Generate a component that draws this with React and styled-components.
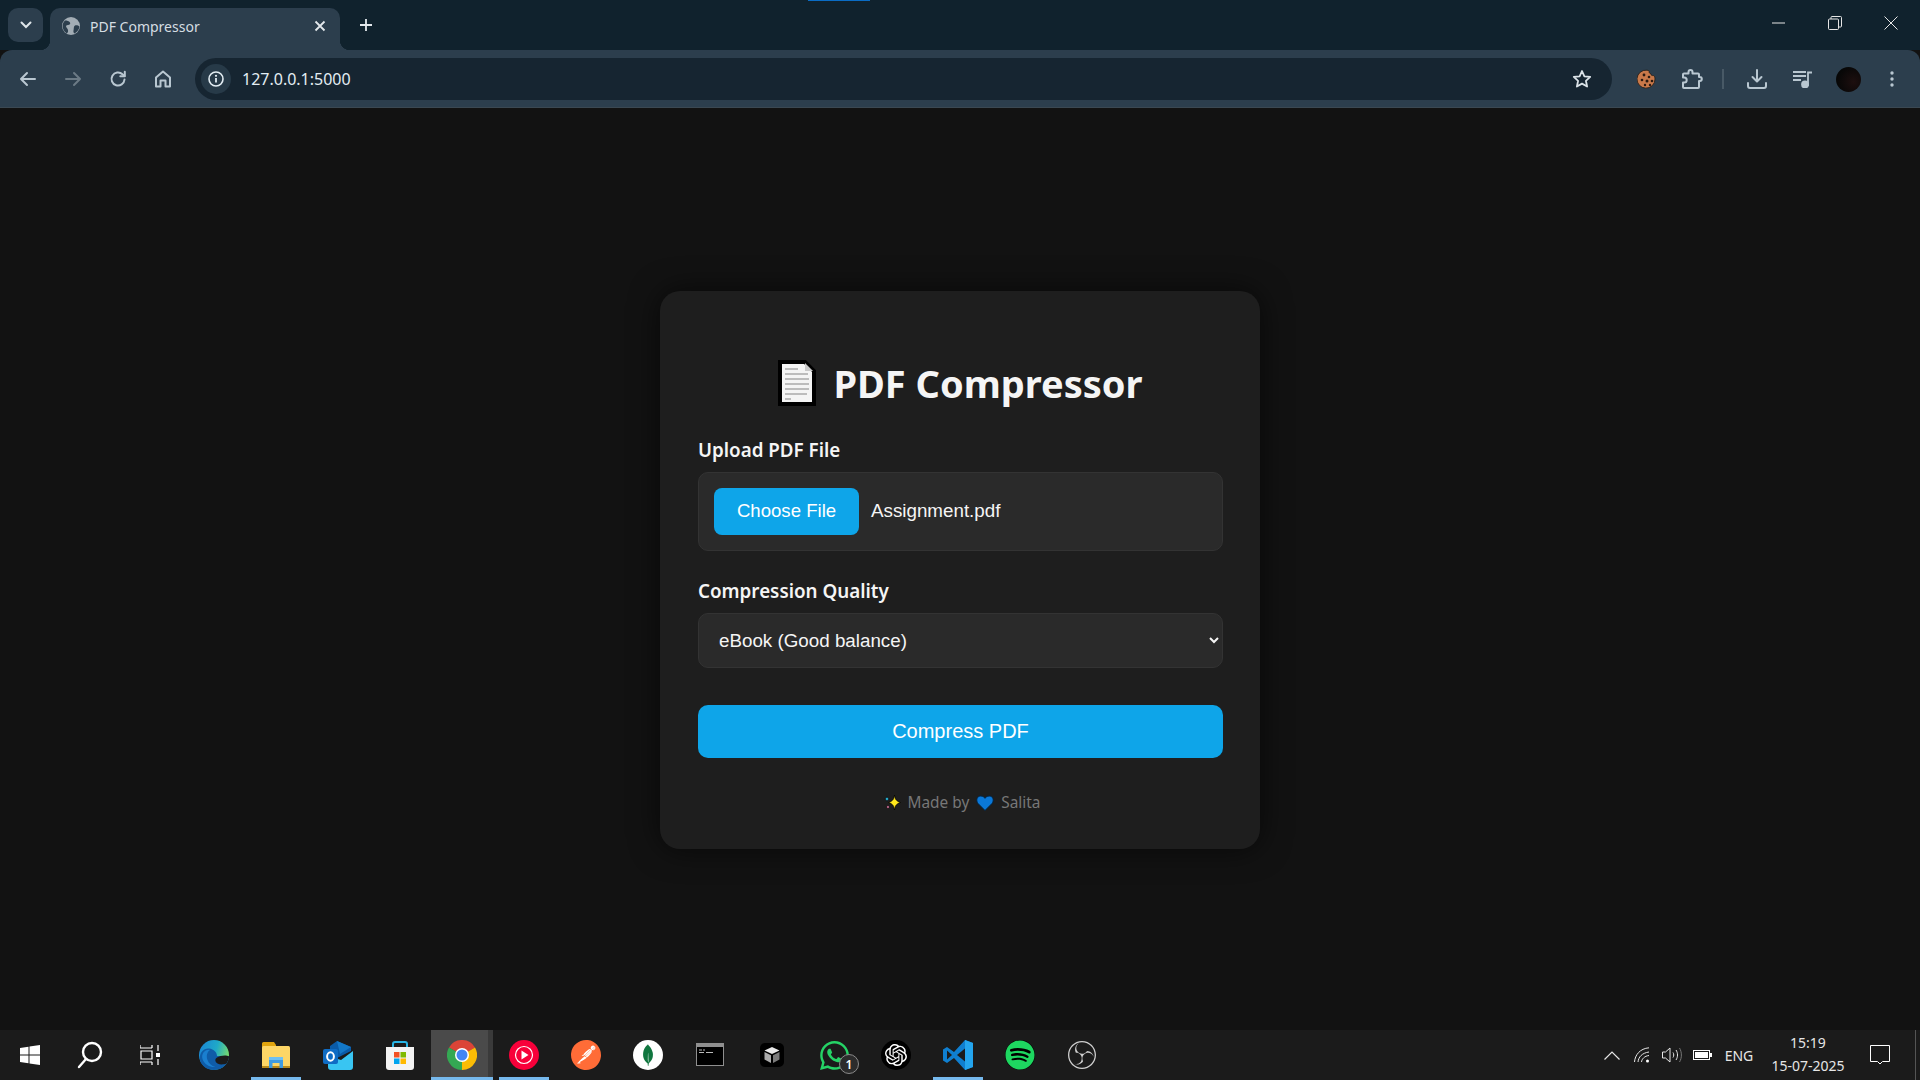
import React from 'react';
import styled, { createGlobalStyle } from 'styled-components';
import { FaWhatsapp, FaSpotify } from 'react-icons/fa';
import { SiOpenai, SiObsstudio, SiPostman, SiMongodb } from 'react-icons/si';

const GlobalStyle = createGlobalStyle`
	html, body { margin: 0; padding: 0; background: #121212; }
	* { box-sizing: border-box; }
	body { font-family: "Noto Sans", "Open Sans", sans-serif; }
`;

const Screen = styled.div`
	width: 1920px;
	height: 1080px;
	display: flex;
	flex-direction: column;
	overflow: hidden;
	background: #121212;
`;

/* browser chrome */
const TitleBar = styled.div`
	position: relative;
	height: 50px;
	background: #10222d;
	display: flex;
	align-items: flex-end;
	padding-left: 8px;
	flex: none;
`;
const LoadSliver = styled.div`
	position: absolute;
	top: 0;
	left: 808px;
	width: 62px;
	height: 1px;
	background: #0a6cc4;
`;
const TabSearch = styled.div`
	width: 35px;
	height: 34px;
	margin-bottom: 8px;
	margin-right: 7px;
	border-radius: 10px;
	background: #2c3e4d;
	display: flex;
	align-items: center;
	justify-content: center;
`;
const Tab = styled.div`
	position: relative;
	width: 290px;
	height: 42px;
	background: #2c3e4d;
	border-radius: 10px 10px 0 0;
	display: flex;
	align-items: center;
	padding: 0 12px 6px 12px;
	gap: 10px;

	&::before, &::after {
		content: '';
		position: absolute;
		bottom: 0;
		width: 10px;
		height: 10px;
	}
	&::before {
		left: -10px;
		background: radial-gradient(circle at 0 0, transparent 10px, #2c3e4d 10.5px);
	}
	&::after {
		right: -10px;
		background: radial-gradient(circle at 100% 0, transparent 10px, #2c3e4d 10.5px);
	}
`;
const TabTitle = styled.span`
	flex: 1;
	font-size: 14px;
	color: #d5dde2;
	white-space: nowrap;
`;
const NewTab = styled.div`
	width: 26px;
	height: 42px;
	margin-left: 13px;
	padding-bottom: 8px;
	display: flex;
	align-items: center;
	justify-content: center;
`;
const WindowControls = styled.div`
	margin-left: auto;
	height: 50px;
	display: flex;
	align-items: center;
	padding: 0 22px 4px 0;
	gap: 42px;
`;
const Toolbar = styled.div`
	height: 58px;
	flex: none;
	background: #2c3e4d;
	border-radius: 12px 12px 0 0;
	border-bottom: 1px solid #3b4852;
	display: flex;
	align-items: center;
	padding: 1px 6px 0 5px;
`;
const NavButton = styled.div`
	width: ${p => p.$w || 45}px;
	height: 40px;
	flex: none;
	display: flex;
	align-items: center;
	justify-content: center;
`;
const Omnibox = styled.div`
	flex: 1;
	height: 42px;
	margin-left: 10px;
	margin-right: 12px;
	border-radius: 21px;
	background: #162531;
	display: flex;
	align-items: center;
	padding: 0 20px 0 6px;
`;
const InfoChip = styled.div`
	width: 30px;
	height: 30px;
	border-radius: 50%;
	background: #273a48;
	display: flex;
	align-items: center;
	justify-content: center;
	flex: none;
`;
const Url = styled.span`
	flex: 1;
	margin-left: 11px;
	font-size: 16px;
	color: #e3edf3;
`;
const ToolDivider = styled.div`
	width: 2px;
	height: 20px;
	background: #485966;
	margin: 0 10px 0 8px;
	flex: none;
`;
const Avatar = styled.div`
	width: 25px;
	height: 25px;
	border-radius: 50%;
	background: radial-gradient(circle at 70% 60%, #1d0f0f, #070707 70%);
`;

/* page */
const Main = styled.main`
	flex: 1;
	display: flex;
	align-items: center;
	justify-content: center;
	background: #121212;
	padding-top: 1px;
`;
const Card = styled.section`
	width: 600px;
	background: #1e1e1e;
	border-radius: 20px;
	padding: 38px 37px 34px 38px;
	box-shadow: 0 0 30px rgba(0, 0, 0, 0.6);
`;
const Heading = styled.h1`
	margin: 28px 0 28px;
	height: 52px;
	line-height: 52px;
	display: flex;
	align-items: center;
	justify-content: center;
	gap: 17px;
	font-size: 38px;
	font-weight: 700;
	color: #f5f5f5;
`;
const FieldLabel = styled.label`
	display: block;
	height: 26px;
	line-height: 26px;
	margin-bottom: 9px;
	font-size: 18.8px;
	font-weight: 600;
	color: #f5f5f5;
`;
const FileBox = styled.div`
	height: 79px;
	margin-bottom: 27px;
	padding: 0 15px;
	background: #2a2a2a;
	border: 1px solid #333;
	border-radius: 10px;
	display: flex;
	align-items: center;
	gap: 12px;
	font-family: "Liberation Sans", Arial, sans-serif;
`;
const ChooseButton = styled.button`
	width: 145px;
	height: 47px;
	border: 0;
	border-radius: 8px;
	background: #0ea5e9;
	color: #fff;
	font-family: inherit;
	font-size: 18.6px;
`;
const FileName = styled.span`
	font-size: 18.8px;
	color: #f5f5f5;
`;
const QualitySelect = styled.select`
	display: block;
	width: 100%;
	height: 55px;
	padding: 0 16px;
	background: #2a2a2a;
	border: 1px solid #333;
	border-radius: 10px;
	color: #f5f5f5;
	font-family: "Liberation Sans", Arial, sans-serif;
	font-size: 18.8px;
`;
const SubmitButton = styled.button`
	display: block;
	width: 100%;
	height: 53px;
	margin-top: 37px;
	border: 0;
	border-radius: 10px;
	background: #0ea5e9;
	color: #fff;
	font-family: "Liberation Sans", Arial, sans-serif;
	font-size: 20px;
`;
const Footer = styled.div`
	height: 24px;
	margin-top: 33px;
	padding-left: 3px;
	display: flex;
	align-items: center;
	justify-content: center;
	gap: 7px;
	font-size: 15.4px;
	color: #777;
`;

/* windows taskbar */
const Taskbar = styled.footer`
	height: 50px;
	flex: none;
	background: #1b1b1b;
	display: flex;
	align-items: stretch;
`;
const SystemButton = styled.div`
	width: 60px;
	display: flex;
	align-items: center;
	justify-content: center;
`;
const AppStrip = styled.div`
	margin-left: 3px;
	display: flex;
`;
const AppIcon = styled.div`
	position: relative;
	width: 62px;
	display: flex;
	align-items: center;
	justify-content: center;
	background: ${p => (p.$active ? 'linear-gradient(90deg, #4a4a4a 92%, #3a3a3a 92%)' : 'transparent')};

	&::after {
		content: '';
		display: ${p => (p.$open ? 'block' : 'none')};
		position: absolute;
		bottom: 0;
		left: ${p => (p.$active ? 0 : 6)}px;
		right: ${p => (p.$active ? 0 : 6)}px;
		height: 3px;
		background: #76b9ed;
	}
`;
const RoundIcon = styled.div`
	width: ${p => p.$size || 30}px;
	height: ${p => p.$size || 30}px;
	border-radius: 50%;
	background: ${p => p.$bg};
	display: flex;
	align-items: center;
	justify-content: center;
`;
const Badge = styled.span`
	position: absolute;
	left: 36px;
	top: 24px;
	width: 20px;
	height: 20px;
	border-radius: 50%;
	background: #2c2c2c;
	border: 1px solid #8a8a8a;
	color: #fff;
	font-size: 12px;
	font-weight: 600;
	display: flex;
	align-items: center;
	justify-content: center;
`;
const Tray = styled.div`
	margin-left: auto;
	display: flex;
	align-items: center;
	color: #e6e6e6;
	border-right: 1px solid #555;
	margin-right: 4px;
`;
const TrayIcon = styled.div`
	width: 30px;
	display: flex;
	justify-content: center;
`;
const Lang = styled.span`
	width: 44px;
	text-align: center;
	font-size: 14px;
`;
const Clock = styled.div`
	width: 94px;
	text-align: center;
	font-size: 14px;
	line-height: 23px;
	margin-bottom: 2px;
`;
const NotifyButton = styled.div`
	width: 47px;
	display: flex;
	justify-content: center;
	margin-left: 1px;
	margin-right: 12px;
`;

const stroke = { fill: 'none', stroke: '#b9c7d1', strokeWidth: 2, strokeLinecap: 'round', strokeLinejoin: 'round' };

const App = () => {
	return (
		<Screen>
			<GlobalStyle />
			<TitleBar>
				<LoadSliver />
				<TabSearch>
					<svg width="12" height="8" viewBox="0 0 12 8"><path d="M1.5 1.5 6 6l4.5-4.5" fill="none" stroke="#dfe6ea" strokeWidth="2" strokeLinecap="round" /></svg>
				</TabSearch>
				<Tab>
					<svg width="18" height="18" viewBox="0 0 18 18">
						<circle cx="9" cy="9" r="9" fill="#a3adb5" />
						<path d="M3 3.500c2 0 4 .5 5 2 .8 1.300-.5 2.500-2 2.600-1.800.2-2.500 1.200-1.500 2.400.8 1 1.600 1.500 1.600 3.500 0 1-.6 2-1.500 2.500C2 14.500.6 11.500.6 9 .6 7 1.500 5 3 3.500zM13 8.500c1.500-.4 3.500 0 4.400 1-.3 3-2 5.500-5 7-1-.8-1.200-2-.8-3.500.3-1.500 0-3.800 1.400-4.500z" fill="#2c3e4d" />
					</svg>
					<TabTitle>PDF Compressor</TabTitle>
					<svg width="12" height="12" viewBox="0 0 12 12" style={{ marginRight: 2 }}><path d="M1.500 1.500l9 9M10.500 1.500l-9 9" stroke="#e3e8ec" strokeWidth="1.800" /></svg>
				</Tab>
				<NewTab>
					<svg width="14" height="14" viewBox="0 0 14 14"><path d="M7 1v12M1 7h12" stroke="#e3e8ec" strokeWidth="1.800" /></svg>
				</NewTab>
				<WindowControls>
					<svg width="14" height="2" viewBox="0 0 14 2"><path d="M0 1h13" stroke="#e6e6e6" /></svg>
					<svg width="14" height="14" viewBox="0 0 14 14" fill="none" stroke="#e6e6e6"><rect x="0.500" y="3" width="10" height="10.500" rx="1" /><path d="M3 3V1.500a1 1 0 0 1 1-1h8.500a1 1 0 0 1 1 1V10a1 1 0 0 1-1 1H10.500" /></svg>
					<svg width="14" height="14" viewBox="0 0 14 14"><path d="M.5.5l13 13M13.500.5l-13 13" stroke="#e6e6e6" /></svg>
				</WindowControls>
			</TitleBar>

			<Toolbar>
				<NavButton>
					<svg width="18" height="16" viewBox="0 0 18 16" {...stroke}><path d="M16 8H2M8 2 2 8l6 6" /></svg>
				</NavButton>
				<NavButton>
					<svg width="18" height="16" viewBox="0 0 18 16" {...stroke} stroke="#6b7a85"><path d="M2 8h14M10 2l6 6-6 6" /></svg>
				</NavButton>
				<NavButton>
					<svg width="18" height="18" viewBox="0 0 18 18" {...stroke}><path d="M15.500 9.500a6.500 6.500 0 1 1-2-5.200L15.500 6" /><path d="M15.800 1.800V6.300H11.300" /></svg>
				</NavButton>
				<NavButton>
					<svg width="18" height="18" viewBox="0 0 18 18" {...stroke}><path d="M2 7.500 9 1.500l7 6V16.500h-4.500v-6h-5v6H2z" /></svg>
				</NavButton>
				<Omnibox>
					<InfoChip>
						<svg width="16" height="16" viewBox="0 0 16 16"><circle cx="8" cy="8" r="7" fill="none" stroke="#e3edf3" strokeWidth="1.600" /><path d="M8 7v4.500" stroke="#e3edf3" strokeWidth="1.800" /><circle cx="8" cy="4.800" r="1.100" fill="#e3edf3" /></svg>
					</InfoChip>
					<Url>127.0.0.1:5000</Url>
					<svg width="20" height="20" viewBox="0 0 20 20" fill="none" stroke="#dbe3e8" strokeWidth="1.800" strokeLinejoin="round"><path d="m10 2 2.400 5.300 5.800.6-4.300 3.900 1.200 5.700L10 14.600l-5.100 2.900 1.200-5.700L1.800 7.900l5.800-.6z" /></svg>
				</Omnibox>
				<NavButton>
					<svg width="20" height="20" viewBox="0 0 20 20">
						<path d="M10 1.200c1 0 1.600.4 2.200 1-.3 1.200.3 2.300 1.500 2.500.2 1.400 1.500 2.200 2.800 1.800.8.600 1.500 1.600 1.500 3.500a9 9 0 1 1-8-8.800z" fill="#c9794a" stroke="#221a14" strokeWidth="0.800" />
						<circle cx="7" cy="6" r="1.400" fill="#2b1a12" /><circle cx="12" cy="8" r="1.300" fill="#2b1a12" /><circle cx="5" cy="11" r="1.300" fill="#2b1a12" /><circle cx="10" cy="12" r="1.500" fill="#2b1a12" /><circle cx="15" cy="12" r="1.300" fill="#2b1a12" /><circle cx="8" cy="16" r="1.200" fill="#2b1a12" /><circle cx="13" cy="16" r="1.200" fill="#2b1a12" />
					</svg>
				</NavButton>
				<NavButton>
					<svg width="22" height="22" viewBox="0 0 22 22" {...stroke}><path d="M2 6.500a1 1 0 0 1 1-1h4.500V4a2 2 0 0 1 4 0v1.500H17a1 1 0 0 1 1 1V9h.8a2 2 0 0 1 0 4H18v6a1 1 0 0 1-1 1H3a1 1 0 0 1-1-1v-4.500h1.200a2.500 2.500 0 0 0 0-5H2z" /></svg>
				</NavButton>
				<ToolDivider />
				<NavButton $w={46}>
					<svg width="22" height="22" viewBox="0 0 22 22" {...stroke}><path d="M11 2v11M6.500 9l4.500 4.500L15.500 9" /><path d="M2 15v3a2 2 0 0 0 2 2h14a2 2 0 0 0 2-2v-3" /></svg>
				</NavButton>
				<NavButton $w={46}>
					<svg width="20" height="18" viewBox="0 0 20 18" fill="none" stroke="#b9c7d1" strokeWidth="1.800"><path d="M0 2h13M0 6h13M0 10h8" /><path d="M15 16V2.500h4" /><circle cx="12" cy="14.500" r="3" fill="#b9c7d1" /></svg>
				</NavButton>
				<NavButton $w={44}><Avatar /></NavButton>
				<NavButton $w={44}>
					<svg width="4" height="16" viewBox="0 0 4 16"><circle cx="2" cy="2" r="1.700" fill="#b9c7d1" /><circle cx="2" cy="8" r="1.700" fill="#b9c7d1" /><circle cx="2" cy="14" r="1.700" fill="#b9c7d1" /></svg>
				</NavButton>
			</Toolbar>

			<Main>
				<Card>
					<Heading>
						<svg width="38" height="46" viewBox="0 0 38 46">
							<path d="M2 2h25l9 9v33H2z" fill="#f4f4f4" stroke="#000" strokeWidth="4" />
							<path d="M27 3v8h8z" fill="#c9c9c9" />
							<path d="M7 9h13M7 14h23M7 19h24M7 24h24M7 29h24M7 34h22M7 39h6" stroke="#a9a9a9" strokeWidth="1.600" />
						</svg>
						<span>PDF Compressor</span>
					</Heading>
					<FieldLabel>Upload PDF File</FieldLabel>
					<FileBox>
						<ChooseButton type="button">Choose File</ChooseButton>
						<FileName>Assignment.pdf</FileName>
					</FileBox>
					<FieldLabel>Compression Quality</FieldLabel>
					<QualitySelect defaultValue="ebook">
						<option value="ebook">eBook (Good balance)</option>
					</QualitySelect>
					<SubmitButton type="button">Compress PDF</SubmitButton>
					<Footer>
						<svg width="17" height="17" viewBox="0 0 17 17">
							<path d="M10.500 1c.6 4 1.500 6 6 7.500-4.500 1.500-5.400 3.500-6 7.500-.6-4-1.500-6-6-7.500 4.500-1.500 5.400-3.500 6-7.500z" fill="#ffe81c" stroke="#000" strokeWidth="0.700" />
							<path d="M3 2.500c.3 1.400 1 2.100 2.500 2.500C4 5.400 3.300 6.100 3 7.500 2.700 6.100 2 5.400.5 5 2 4.600 2.700 3.900 3 2.500z" fill="#2ab6d9" stroke="#000" strokeWidth="0.400" />
							<path d="M4 11c.3 1.100.8 1.700 2 2-1.200.3-1.700.9-2 2-.3-1.100-.8-1.700-2-2 1.200-.3 1.700-.9 2-2z" fill="#e87fa8" stroke="#000" strokeWidth="0.400" />
						</svg>
						<span>Made by</span>
						<svg width="18" height="16" viewBox="0 0 18 16"><path d="M9 15.500 2 8.500C-.5 5.500 1 1 4.800 1 6.800 1 8.200 2 9 3.300 9.800 2 11.200 1 13.200 1 17 1 18.500 5.500 16 8.500z" fill="#0a78d8" stroke="#04233f" strokeWidth="1" /></svg>
						<span>Salita</span>
					</Footer>
				</Card>
			</Main>

			<Taskbar>
				<SystemButton>
					<svg width="20" height="20" viewBox="0 0 20 20" fill="#fff"><path d="M0 3l8.500-1.300v7.800H0zM9.500 1.500 20 0v9.500H9.500zM0 10.500h8.500v7.800L0 17zM9.500 10.500H20V20L9.500 18.500z" /></svg>
				</SystemButton>
				<SystemButton>
					<svg width="26" height="28" viewBox="0 0 26 28" fill="none" stroke="#fff" strokeWidth="2.400" strokeLinecap="round"><circle cx="15" cy="11" r="9" /><path d="M9 18 2 26" /></svg>
				</SystemButton>
				<SystemButton>
					<svg width="20" height="20" viewBox="0 0 20 20" fill="none" stroke="#fff" strokeWidth="1.200"><path d="M0 3h12M12 0v3M0 0v3M1 6h11v8H1zM0 17h12M12 17v3M0 17v3M18 0v6M18 14v6" /><rect x="16" y="8" width="4" height="4" fill="#fff" stroke="none" /></svg>
				</SystemButton>
				<AppStrip>
					<AppIcon>
						<svg width="30" height="30" viewBox="0 0 30 30">
							<defs>
								<linearGradient id="edgeA" x1="0" y1="0.200" x2="1" y2="0.500"><stop offset="0" stopColor="#1a86d6" /><stop offset="0.550" stopColor="#1fa9c8" /><stop offset="1" stopColor="#78dc6c" /></linearGradient>
							</defs>
							<circle cx="15" cy="15" r="15" fill="url(#edgeA)" />
							<path d="M1 20C0 12 5 8 10 8.500c5 .5 8 4 8 7.500H30c0 8-7 14-15 14C8 30 2.500 26 1 20z" fill="#0f5ca8" />
							<path d="M30 16.500c0 1.500-.5 4-2.500 7C25 24.500 21 25 18.500 23.500 16 22 15.500 19 18 17.500c3-1.800 9-3 12-1z" fill="#1b1b1b" />
							<path d="M11 10c-3 2-4 6-2.500 10 1 3 4 6 8 7-5 .5-11-2-13-8C2 14 6 9 11 10z" fill="#1a7fd0" />
						</svg>
					</AppIcon>
					<AppIcon $open>
						<svg width="28" height="26" viewBox="0 0 28 26">
							<path d="M0 1.500A1.500 1.500 0 0 1 1.500 0H12l2 3v3H0z" fill="#e0a40e" />
							<rect y="4" width="28" height="22" rx="1.500" fill="#fdd666" />
							<rect y="24" width="28" height="2" fill="#b98a1a" />
							<path d="M7 26v-9h14v9h-3.500v-5h-7v5z" fill="#3f9be0" />
							<rect x="7" y="15" width="14" height="3" fill="#6fc0f2" />
						</svg>
					</AppIcon>
					<AppIcon>
						<svg width="30" height="30" viewBox="0 0 30 30">
							<path d="M14 1 28 7v4L14 18 7 12V6z" fill="#0a5ba8" />
							<path d="M14 1 28 7 17 14z" fill="#1378c8" />
							<path d="M5 16l13 4 12-9v16a3 3 0 0 1-3 3H8a3 3 0 0 1-3-3z" fill="#39c5f2" />
							<rect y="9" width="15" height="15" rx="2" fill="#0f6cc4" />
							<ellipse cx="7.500" cy="16.500" rx="3.400" ry="4.200" fill="none" stroke="#fff" strokeWidth="2" />
						</svg>
					</AppIcon>
					<AppIcon>
						<svg width="30" height="30" viewBox="0 0 30 30">
							<path d="M8 8V4a2 2 0 0 1 2-2h10a2 2 0 0 1 2 2v4" fill="none" stroke="#27b5e6" strokeWidth="2" />
							<path d="M1 7h28v20a3 3 0 0 1-3 3H4a3 3 0 0 1-3-3z" fill="#f3f3f3" />
							<rect x="9" y="12" width="5.500" height="5.500" fill="#f25022" /><rect x="15.500" y="12" width="5.500" height="5.500" fill="#7fba00" /><rect x="9" y="18.500" width="5.500" height="5.500" fill="#00a4ef" /><rect x="15.500" y="18.500" width="5.500" height="5.500" fill="#ffb900" />
						</svg>
					</AppIcon>
					<AppIcon $open $active>
						<svg width="30" height="30" viewBox="0 0 30 30">
							<path d="M15 15 2.000 7.500A15 15 0 0 1 28 7.500z" fill="#db4437" />
							<path d="M15 15 28 7.500A15 15 0 0 1 15 30z" fill="#fbbc05" />
							<path d="M15 15V30A15 15 0 0 1 2.000 7.500z" fill="#34a853" />
							<circle cx="15" cy="15" r="7" fill="#fff" />
							<circle cx="15" cy="15" r="5.500" fill="#4285f4" />
						</svg>
					</AppIcon>
					<AppIcon $open>
						<svg width="30" height="30" viewBox="0 0 30 30">
							<circle cx="15" cy="15" r="15" fill="#f8003a" />
							<circle cx="15" cy="15" r="8.500" fill="none" stroke="#fff" strokeWidth="1.200" />
							<path d="M12.500 10.500v9l7-4.500z" fill="#fff" />
						</svg>
					</AppIcon>
					<AppIcon>
						<RoundIcon $bg="#fff" $size={26}><SiPostman size={30} color="#ff6c37" style={{ flex: 'none' }} /></RoundIcon>
					</AppIcon>
					<AppIcon>
						<RoundIcon $bg="#fff"><SiMongodb size={22} color="#10763f" /></RoundIcon>
					</AppIcon>
					<AppIcon>
						<svg width="28" height="24" viewBox="0 0 28 24">
							<rect x="0.500" y="0.500" width="27" height="22" fill="#000" stroke="#8f8f8f" />
							<rect x="1" y="1" width="26" height="3" fill="#8f8f8f" />
							<path d="M3 7h3M7 7h2M3 9.500h5M10 9.500h7" stroke="#bbb" />
						</svg>
					</AppIcon>
					<AppIcon>
						<svg width="24" height="24" viewBox="0 0 24 24">
							<rect width="24" height="24" rx="5" fill="#000" />
							<path d="M12 4l7.500 3.500-7.500 3.500-7.500-3.500z" fill="#e8e8e8" />
							<path d="M4.500 9l6.500 3.200V20l-6.500-3.500z" fill="#aaa" />
							<path d="M19.500 9 13 12.200V20l6.500-3.500z" fill="#7a7a7a" />
						</svg>
					</AppIcon>
					<AppIcon>
						<FaWhatsapp size={33} color="#25d366" />
						<Badge>1</Badge>
					</AppIcon>
					<AppIcon>
						<RoundIcon $bg="#000"><SiOpenai size={22} color="#fff" /></RoundIcon>
					</AppIcon>
					<AppIcon $open>
						<svg width="30" height="30" viewBox="0 0 30 30">
							<path d="M22 0 11 12 4 7 0 9.500v11L4 23l7-5 11 12 8-3V3z" fill="#0f7fd0" />
							<path d="M22 0 30 3v24l-8 3z" fill="#24a5ee" />
							<path d="M4 10.500v9l5-4.500z" fill="#1b1b1b" />
							<path d="M22 8.500 14 15l8 6.500z" fill="#1b1b1b" />
						</svg>
					</AppIcon>
					<AppIcon>
						<RoundIcon $bg="#000"><FaSpotify size={30} color="#1ed760" /></RoundIcon>
					</AppIcon>
					<AppIcon>
						<SiObsstudio size={28} color="#cfcfcf" />
					</AppIcon>
				</AppStrip>
				<Tray>
					<TrayIcon>
						<svg width="16" height="9" viewBox="0 0 16 9"><path d="M.5 8.500 8 1l7.500 7.500" fill="none" stroke="#e6e6e6" strokeWidth="1.200" /></svg>
					</TrayIcon>
					<TrayIcon>
						<svg width="16" height="16" viewBox="0 0 16 16" fill="none" stroke="#e6e6e6"><path d="M.5 15C1 8 6 1.500 15 .8M4 15c.5-5 4-9 11-10M7.500 15c.3-3 3-6 7.500-6.500" /><circle cx="13.500" cy="14" r="1.500" fill="#fff" stroke="none" /></svg>
					</TrayIcon>
					<TrayIcon>
						<svg width="20" height="16" viewBox="0 0 20 16" fill="none" stroke="#e6e6e6"><path d="M.5 5h3L8 1v14l-4.500-4h-3z" /><path d="M11 5.500c1 1.500 1 3.500 0 5M14 3c2 3 2 7 0 10" /><path d="M17.500 1c2.500 4 2.500 10 0 14" stroke="#777" /></svg>
					</TrayIcon>
					<TrayIcon>
						<svg width="19" height="10" viewBox="0 0 19 10"><rect x="0.500" y="0.500" width="16" height="9" fill="none" stroke="#fff" /><rect x="2" y="2" width="13" height="6" fill="#fff" /><rect x="17" y="3" width="2" height="4" fill="#fff" /></svg>
					</TrayIcon>
					<Lang>ENG</Lang>
					<Clock>15:19<br />15-07-2025</Clock>
					<NotifyButton>
						<svg width="20" height="20" viewBox="0 0 20 20"><path d="M.5.500h19v16h-7l-2.500 2.500-2.500-2.500h-7z" fill="none" stroke="#fff" /></svg>
					</NotifyButton>
				</Tray>
			</Taskbar>
		</Screen>
	);
};

export default App;
